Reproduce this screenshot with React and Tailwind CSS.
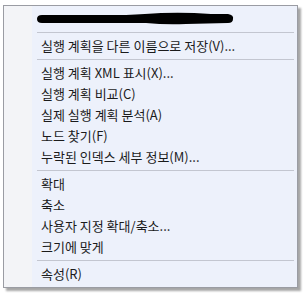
import React from "react";

const groups = [
  ["실행 계획을 다른 이름으로 저장(V)..."],
  ["실행 계획 XML 표시(X)...", "실행 계획 비교(C)", "실제 실행 계획 분석(A)", "노드 찾기(F)", "누락된 인덱스 세부 정보(M)..."],
  ["확대", "축소", "사용자 지정 확대/축소...", "크기에 맞게"],
  ["속성(R)"],
];

function Sep() {
  return (
    <div className="h-[6px] flex items-center pl-[33px] pr-[3px]">
      <div className="h-px w-full bg-[#c3c6d0]" />
    </div>
  );
}

function Item({ label }) {
  return (
    <div className="h-[21px] flex items-center pl-[37px] text-[13px] text-[#1b1b1b] leading-none">
      {label}
    </div>
  );
}

export default function App() {
  return (
    <div className="w-[305px] h-[294px] bg-white relative" style={{ fontFamily: '"Noto Sans CJK KR", "Noto Sans", sans-serif' }}>
      <div className="absolute left-[3px] top-[5px] w-[295px] h-[283px] border border-[#9a9ca3] bg-[#edf1fb] shadow-[3px_3px_2px_rgba(0,0,0,0.35)] flex">
        <div className="absolute left-0 top-0 bottom-0 w-[28px] bg-[#f3f4f7] [background-image:radial-gradient(#e4e6ec_0.6px,transparent_0.7px)] [background-size:2px_2px]" />
        <div className="relative flex-1 pt-[2px] flex flex-col">
          <div className="h-[21px] flex items-center pl-[32px]">
            <svg width="200" height="16" viewBox="0 0 200 16">
              <path d="M6 4 L90 4 Q110 3 125 2 Q150 1 175 3 L192 3 Q198 4 197 8 Q197 12 192 12 L150 13 Q130 14 110 12 L6 12 Q1 12 1 8 Q1 4 6 4 Z" fill="#000" />
            </svg>
          </div>
          {groups.map((g, i) => (
            <React.Fragment key={i}>
              <Sep />
              {g.map((l) => (
                <Item key={l} label={l} />
              ))}
            </React.Fragment>
          ))}
        </div>
      </div>
    </div>
  );
}
